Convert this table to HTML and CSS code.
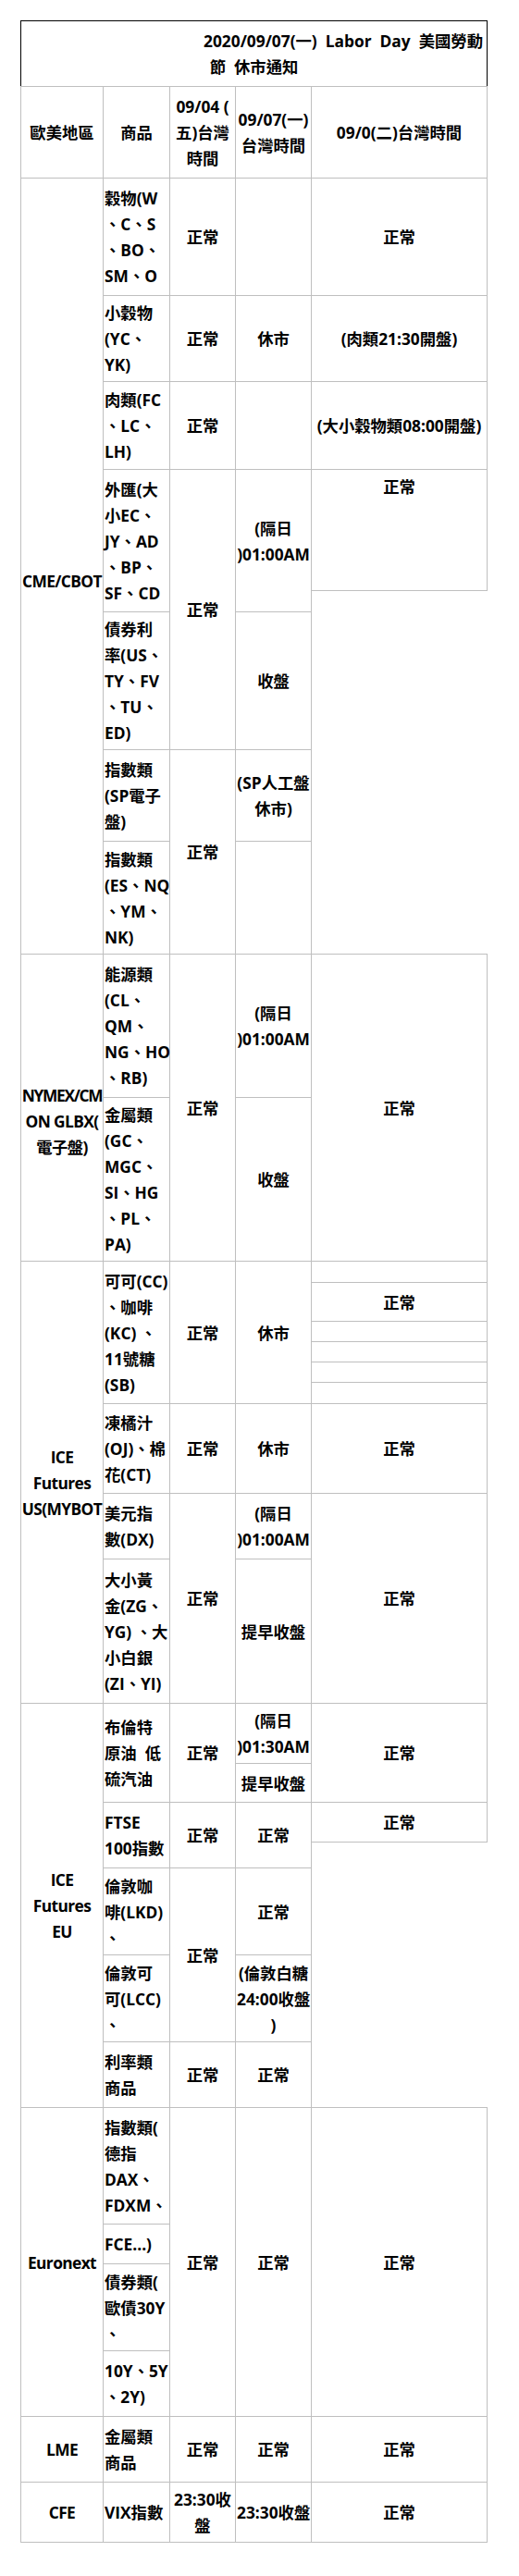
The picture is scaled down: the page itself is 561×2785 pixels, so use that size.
FILE: index.html
```html
<!DOCTYPE html>
<html lang="zh-Hant">
<head>
<meta charset="utf-8">
<title>2020/09/07 Labor Day 美國勞動節 休市通知</title>
<link rel="stylesheet" href="styles.css">
</head>
<body>
<div class="page">
<table class="notice">
<colgroup>
<col class="c1"><col class="c2"><col class="c3"><col class="c4"><col class="c5">
</colgroup>
<tbody>
<tr class="h71"><td class="title" colspan="5"><span class="t1">2020/09/07(一)&nbsp;&nbsp;Labor&nbsp;&nbsp;Day&nbsp;&nbsp;美國勞動</span><span class="t2">節&nbsp;&nbsp;休市通知</span></td></tr>
<tr class="h99"><td>歐美地區</td><td>商品</td><td>09/04 (<br>五)台灣<br>時間</td><td>09/07(一)<br>台灣時間</td><td>09/0(二)台灣時間</td></tr>

<tr class="h127"><td class="region cme" rowspan="8">CME/CBOT</td><td class="item">穀物(W<br>、C、S<br>、BO、<br>SM、O</td><td>正常</td><td></td><td>正常</td></tr>
<tr class="h93"><td class="item">小穀物<br>(YC、<br>YK)</td><td>正常</td><td>休市</td><td>(肉類21:30開盤)</td></tr>
<tr class="h95"><td class="item">肉類(FC<br>、LC、<br>LH)</td><td>正常</td><td></td><td>(大小穀物類08:00開盤)</td></tr>
<tr class="h131"><td class="item" rowspan="2">外匯(大<br>小EC、<br>JY、AD<br>、BP、<br>SF、CD</td><td rowspan="3">正常</td><td rowspan="2">(隔日<br>)01:00AM</td><td class="top">正常</td></tr>
<tr class="h23"><td class="void" rowspan="4"></td></tr>
<tr class="h149"><td class="item">債券利<br>率(US、<br>TY、FV<br>、TU、<br>ED)</td><td>收盤</td></tr>
<tr class="h99"><td class="item">指數類<br>(SP電子<br>盤)</td><td rowspan="2">正常</td><td>(SP人工盤<br>休市)</td></tr>
<tr class="h122"><td class="item">指數類<br>(ES、NQ<br>、YM、<br>NK)</td><td></td></tr>

<tr class="h155"><td class="region nymex" rowspan="2"><span class="squeeze">NYMEX/CM</span><br>ON GLBX(<br>電子盤)</td><td class="item">能源類<br>(CL、<br>QM、<br>NG、HO<br>、RB)</td><td rowspan="2">正常</td><td>(隔日<br>)01:00AM</td><td rowspan="2">正常</td></tr>
<tr class="h177"><td class="item">金屬類<br>(GC、<br>MGC、<br>SI、HG<br>、PL、<br>PA)</td><td>收盤</td></tr>

<tr class="h23"><td class="region" rowspan="9">ICE<br>Futures<br>US(MYBOT</td><td class="item" rowspan="6">可可(CC)<br>、咖啡<br>(KC) 、<br>11號糖<br>(SB)</td><td rowspan="6">正常</td><td rowspan="6">休市</td><td></td></tr>
<tr class="h42"><td>正常</td></tr>
<tr class="h22"><td></td></tr>
<tr class="h22"><td></td></tr>
<tr class="h22"><td></td></tr>
<tr class="h23"><td></td></tr>
<tr class="h97"><td class="item">凍橘汁<br>(OJ)、棉<br>花(CT)</td><td>正常</td><td>休市</td><td>正常</td></tr>
<tr class="h71"><td class="item">美元指<br>數(DX)</td><td rowspan="2">正常</td><td>(隔日<br>)01:00AM</td><td rowspan="2">正常</td></tr>
<tr class="h156"><td class="item">大小黃<br>金(ZG、<br>YG) 、大<br>小白銀<br>(ZI、YI)</td><td>提早收盤</td></tr>

<tr class="h65"><td class="region" rowspan="7">ICE<br>Futures<br>EU</td><td class="item" rowspan="2">布倫特<br>原油&nbsp;&nbsp;低<br>硫汽油</td><td rowspan="2">正常</td><td>(隔日<br>)01:30AM</td><td rowspan="2">正常</td></tr>
<tr class="h42"><td>提早收盤</td></tr>
<tr class="h43"><td class="item" rowspan="2">FTSE<br>100指數</td><td rowspan="2">正常</td><td rowspan="2">正常</td><td>正常</td></tr>
<tr class="h28"><td class="void" rowspan="4"></td></tr>
<tr class="h94"><td class="item">倫敦咖<br>啡(LKD)<br>、</td><td rowspan="2">正常</td><td>正常</td></tr>
<tr class="h94"><td class="item">倫敦可<br>可(LCC)<br>、</td><td>(倫敦白糖<br>24:00收盤<br>)</td></tr>
<tr class="h71"><td class="item">利率類<br>商品</td><td>正常</td><td>正常</td></tr>

<tr class="h126"><td class="region" rowspan="4">Euronext</td><td class="item">指數類(<br>德指<br>DAX、<br>FDXM、</td><td rowspan="4">正常</td><td rowspan="4">正常</td><td rowspan="4">正常</td></tr>
<tr class="h43"><td class="item">FCE...)</td></tr>
<tr class="h94"><td class="item">債券類(<br>歐債30Y<br>、</td></tr>
<tr class="h71"><td class="item">10Y、5Y<br>、2Y)</td></tr>

<tr class="h71"><td class="region">LME</td><td class="item">金屬類<br>商品</td><td>正常</td><td>正常</td><td>正常</td></tr>
<tr class="h65"><td class="region">CFE</td><td class="item">VIX指數</td><td>23:30收<br>盤</td><td>23:30收盤</td><td>正常</td></tr>
</tbody>
</table>
</div>
</body>
</html>
```

FILE: styles.css
```css
html, body {
  margin: 0;
  padding: 0;
  background: #ffffff;
}

body {
  color: #000000;
  font-family: "Open Sans", "Noto Sans CJK TC", sans-serif;
  font-weight: 700;
  font-size: 17.33px;
  line-height: 28px;
}

.page {
  padding: 22px 0 0 22px;
}

.notice {
  border-collapse: collapse;
  table-layout: fixed;
  width: 504px;
}

.c1 { width: 89px; }
.c2 { width: 72px; }
.c3 { width: 71px; }
.c4 { width: 82px; }
.c5 { width: 190px; }

.notice td {
  border: 1px solid #bfbfbf;
  padding: 0 1px;
  text-align: center;
  vertical-align: middle;
  white-space: nowrap;
}

.notice td.item {
  text-align: left;
}

.notice td.region {
  overflow: hidden;
  padding: 0;
  letter-spacing: -0.6px;
}

.squeeze {
  letter-spacing: -1.3px;
}

.notice td.cme {
  padding-top: 31px;
}

.notice td.nymex {
  padding-top: 28px;
}

.notice td.top {
  vertical-align: top;
  padding-top: 4px;
}

.notice td.void {
  border: none;
}

.notice td.title {
  border: 1px solid #000000;
  border-bottom-color: #bfbfbf;
  padding: 0 4px 0 0;
}

.t1 {
  display: block;
  text-align: right;
}

.t2 {
  display: block;
  text-align: center;
  padding-left: 4px;
}

.h22 { height: 22px; }
.h23 { height: 23px; }
.h28 { height: 28px; }
.h42 { height: 42px; }
.h43 { height: 43px; }
.h65 { height: 65px; }
.h71 { height: 71px; }
.h93 { height: 93px; }
.h94 { height: 94px; }
.h95 { height: 95px; }
.h97 { height: 97px; }
.h99 { height: 99px; }
.h122 { height: 122px; }
.h126 { height: 126px; }
.h127 { height: 127px; }
.h131 { height: 131px; }
.h149 { height: 149px; }
.h155 { height: 155px; }
.h156 { height: 156px; }
.h177 { height: 177px; }
```
